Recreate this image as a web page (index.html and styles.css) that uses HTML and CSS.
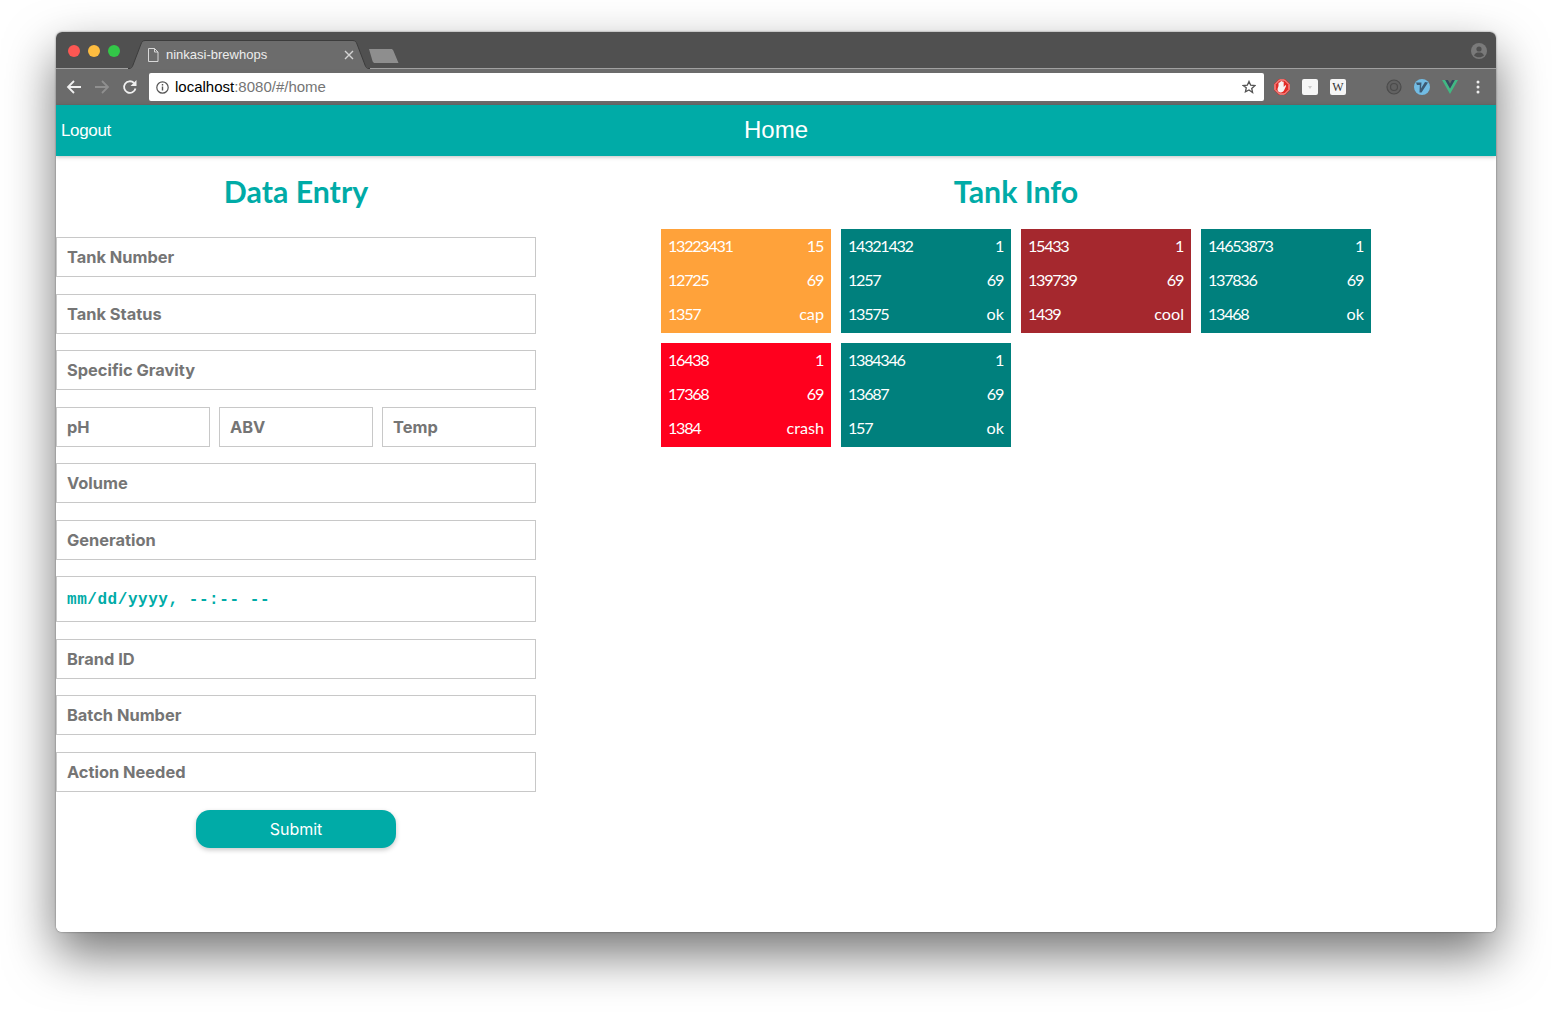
FILE: index.html
```html
<!DOCTYPE html>
<html lang="en">
<head>
<meta charset="utf-8">
<title>ninkasi-brewhops</title>
<link rel="stylesheet" href="styles.css">
</head>
<body>
<div class="window">
  <div class="tabstrip">
    <div class="lights"><span class="light red"></span><span class="light yellow"></span><span class="light green"></span></div>
    <div class="tab">
      <svg class="tab-shape" width="244" height="29" viewBox="0 0 244 29"><path d="M0 29l2-1c1-.5 2-1 3-3L13 4c.6-2 2-3.500 4-3.500h208c2 0 3.400 1.500 4 3.500l8 21c1 2 2 2.500 3 3l2 1z" fill="#6c6c6c"/><path d="M0 28.500h1c2 0 3.200-1 4-3.500L13 4c.6-2 2-3.500 4-3.500h208c2 0 3.400 1.500 4 3.500l8 21c.8 2.500 2 3.500 4 3.500h1" fill="none" stroke="#3c3c3c"/></svg>
      <svg class="tab-file" width="12" height="14" viewBox="0 0 12 14"><path d="M1.500.5h6l3.500 3.500v9.500h-9.500zM7.500.5v3.500h3.500" fill="none" stroke="#d8d8d8"/></svg>
      <span class="tab-title">ninkasi-brewhops</span>
      <svg class="tab-close" width="10" height="10" viewBox="0 0 10 10"><path d="M1 1l8 8M9 1l-8 8" stroke="#d4d4d4" stroke-width="1.400"/></svg>
    </div>
    <svg class="newtab" width="34" height="16" viewBox="0 0 34 16"><path d="M1 1h22c1 0 2 .5 2.500 2l5 12H7c-1 0-2-.5-2.500-2z" fill="#8e8e8e"/></svg>
    <svg class="profile" width="16" height="16" viewBox="0 0 16 16"><circle cx="8" cy="8" r="8" fill="#7a7a7a"/><circle cx="8" cy="6" r="2.600" fill="#505050"/><path d="M3 12.500c1-2.500 3-3 5-3s4 .5 5 3c-1.300 1.200-3 1.800-5 1.800s-3.700-.6-5-1.800z" fill="#505050"/></svg>
  </div>
  <div class="toolbar">
    <svg class="nav" width="16" height="16" viewBox="0 0 16 16"><path d="M15 8H2M8 2L2 8l6 6" fill="none" stroke="#f0f0f0" stroke-width="1.800"/></svg>
    <svg class="nav" width="16" height="16" viewBox="0 0 16 16"><path d="M1 8h13M8 2l6 6-6 6" fill="none" stroke="#8f8f8f" stroke-width="1.800"/></svg>
    <svg class="nav" width="16" height="16" viewBox="0 0 16 16"><path d="M13.500 9.500A5.800 5.800 0 1 1 12 4" fill="none" stroke="#f0f0f0" stroke-width="1.800"/><path d="M14.500 1v6h-6z" fill="#f0f0f0"/></svg>
    <div class="omnibox">
      <svg class="info" width="13" height="13" viewBox="0 0 13 13"><circle cx="6.500" cy="6.500" r="5.700" fill="none" stroke="#555" stroke-width="1.200"/><path d="M6.500 5.500v4M6.500 3v1.500" stroke="#555" stroke-width="1.400"/></svg>
      <span class="url"><span class="host">localhost</span>:8080/#/home</span>
      <svg class="star" width="14" height="14" viewBox="0 0 24 24"><path d="M12 2.500l2.900 6.400 7 .8-5.200 4.700 1.400 6.900L12 17l-6.100 3.300 1.400-6.900L2.100 9.700l7-.8z" fill="none" stroke="#555" stroke-width="2.300"/></svg>
    </div>
    <div class="extensions">
      <svg width="16" height="16" viewBox="0 0 16 16"><path d="M5 0h6l5 5v6l-5 5H5l-5-5V5z" fill="#e22b27"/><path d="M5.500 1h5L15 5.500v5L10.500 15h-5L1 10.500v-5z" fill="none" stroke="#f3b5b3"/><path d="M4.500 7V4c0-.8 1-.8 1.200 0V3c0-.8 1.200-.8 1.300 0v-.5c0-.8 1.300-.8 1.400 0V3c0-.8 1.300-.8 1.300 0v5l1.300-1.500c.6-.6 1.400 0 1 .7l-1.800 3.800c-.6 1.500-1.800 2.500-3.500 2.500-2 0-3.200-1.500-3.200-3.500z" fill="#f6f0f0"/></svg>
      <span class="ext-blank"><i></i></span>
      <span class="ext-wiki">W</span>
      <svg class="ext-gap" width="16" height="16" viewBox="0 0 16 16"><circle cx="8" cy="8" r="7" fill="#616161" stroke="#4b4b4b" stroke-width="1.200"/><circle cx="8" cy="8" r="3.500" fill="none" stroke="#4b4b4b" stroke-width="1.200"/></svg>
      <svg width="16" height="16" viewBox="0 0 16 16"><circle cx="8" cy="8" r="8" fill="#72bce4"/><path d="M2 3.500h5.500L7 9.500 11 3l3 .5L7.500 13.500H5.500L5.800 6H3z" fill="#3d5a73"/></svg>
      <svg width="16" height="14" viewBox="0 0 16 14"><path d="M0 0h3.200L8 8.500 12.800 0H16L8 14z" fill="#41b883"/><path d="M3.200 0h2.700L8 3.800 10.100 0h2.700L8 8.500z" fill="#35495e"/></svg>
      <svg width="16" height="16" viewBox="0 0 16 16"><circle cx="8" cy="3" r="1.500" fill="#eee"/><circle cx="8" cy="8" r="1.500" fill="#eee"/><circle cx="8" cy="13" r="1.500" fill="#eee"/></svg>
    </div>
  </div>
  <header class="app-header">
    <a class="logout">Logout</a>
    <h1 class="page-title">Home</h1>
  </header>
  <main class="content">
    <section class="entry">
      <h2 class="section-title">Data Entry</h2>
      <form class="form">
        <input class="field" placeholder="Tank Number">
        <input class="field" placeholder="Tank Status">
        <input class="field" placeholder="Specific Gravity">
        <div class="triple">
          <input class="field" placeholder="pH">
          <input class="field" placeholder="ABV">
          <input class="field" placeholder="Temp">
        </div>
        <input class="field" placeholder="Volume">
        <input class="field" placeholder="Generation">
        <input class="field date" placeholder="mm/dd/yyyy, --:-- --">
        <input class="field" placeholder="Brand ID">
        <input class="field" placeholder="Batch Number">
        <input class="field" placeholder="Action Needed">
        <button class="submit" type="button">Submit</button>
      </form>
    </section>
    <section class="tanks">
      <h2 class="section-title">Tank Info</h2>
      <div class="tiles">
        <div class="tile orange"><span class="num">13223431</span><span class="num">15</span><span class="num">12725</span><span class="num">69</span><span class="num">1357</span><span>cap</span></div>
        <div class="tile teal"><span class="num">14321432</span><span class="num">1</span><span class="num">1257</span><span class="num">69</span><span class="num">13575</span><span>ok</span></div>
        <div class="tile brown"><span class="num">15433</span><span class="num">1</span><span class="num">139739</span><span class="num">69</span><span class="num">1439</span><span>cool</span></div>
        <div class="tile teal"><span class="num">14653873</span><span class="num">1</span><span class="num">137836</span><span class="num">69</span><span class="num">13468</span><span>ok</span></div>
        <div class="tile red"><span class="num">16438</span><span class="num">1</span><span class="num">17368</span><span class="num">69</span><span class="num">1384</span><span>crash</span></div>
        <div class="tile teal"><span class="num">1384346</span><span class="num">1</span><span class="num">13687</span><span class="num">69</span><span class="num">157</span><span>ok</span></div>
      </div>
    </section>
  </main>
</div>
</body>
</html>
```
FILE: styles.css
```css
* { box-sizing: border-box; }
html, body { height: 100%; }
body {
  margin: 0;
  padding: 32px 56px 0;
  background: #fff;
  overflow: hidden;
  font-family: "Liberation Sans", Arial, sans-serif;
}
.window {
  width: 1440px;
  height: 900px;
  background: #fff;
  border-radius: 6px;
  overflow: hidden;
  display: flex;
  flex-direction: column;
}
body::before {
  content: "";
  position: absolute;
  left: 56px;
  top: 32px;
  width: 1440px;
  height: 900px;
  border-radius: 6px;
  box-shadow: 0 22px 50px rgba(0,0,0,.55), 0 0 2px rgba(0,0,0,.5);
  z-index: -1;
}
.tabstrip {
  height: 37px;
  flex: none;
  background: #505050;
  border-bottom: 1px solid #a0a0a0;
  display: flex;
  align-items: flex-start;
  position: relative;
}
.lights { display: flex; gap: 8px; padding: 13px 0 0 12px; width: 74px; flex: none; }
.light { width: 12px; height: 12px; border-radius: 50%; }
.red { background: #fc5753; }
.yellow { background: #fdbc40; }
.green { background: #33c748; }
.tab {
  position: relative;
  width: 240px;
  height: 36px;
  flex: none;
  display: flex;
  align-items: center;
  padding: 9px 16px 0 17px;
  color: #ececec;
}
.tab-shape { position: absolute; left: -2px; top: 8px; }
.tab-file, .tab-title, .tab-close { position: relative; }
.tab-file { margin-right: 7px; flex: none; }
.tab-title { font-size: 13px; flex: 1; font-family: "Liberation Sans", Arial, sans-serif; }
.tab-close { flex: none; }
.newtab { margin: 16px 0 0 -2px; flex: none; }
.profile { margin: 11px 9px 0 auto; flex: none; }
.toolbar {
  height: 36px;
  flex: none;
  background: #6b6b6b;
  display: flex;
  align-items: center;
  padding: 0 10px 0 10px;
}
.nav { margin-right: 12px; flex: none; }
.nav:nth-child(3) { margin-right: 11px; }
.omnibox {
  width: 1115px;
  height: 28px;
  background: #fff;
  border-radius: 2px;
  display: flex;
  align-items: center;
  padding: 0 8px 0 7px;
  flex: none;
}
.info { flex: none; margin-right: 6px; }
.url { font-size: 15px; color: #757575; flex: 1; padding-bottom: 2px; font-family: "Liberation Sans", Arial, sans-serif; }
.host { color: #000; }
.star { flex: none; }
.extensions { display: flex; align-items: center; gap: 12px; margin-left: 10px; flex: none; }
.ext-blank {
  width: 16px; height: 16px; background: #f7f7f7; border-radius: 2px;
  display: flex; justify-content: center; padding-top: 7px;
}
.ext-blank i { width: 0; height: 0; border: 2.500px solid transparent; border-top: 3px solid #ccc; }
.ext-wiki {
  width: 16px; height: 16px; background: #f5f5f5; border-radius: 2px;
  font: 12px/16px "Liberation Serif", serif; text-align: center; color: #333;
}
.ext-gap { margin-left: 28px; }
.app-header {
  height: 51px;
  flex: none;
  background: #00aba7;
  color: #fff;
  display: flex;
  align-items: center;
  justify-content: center;
  position: relative;
  box-shadow: 0 1px 4px rgba(0,0,0,.25);
  z-index: 1;
}
.logout { position: absolute; left: 5px; top: 16px; font-size: 17px; letter-spacing: -.35px; }
.page-title { margin: 0 0 2px; font-size: 24px; font-weight: 400; }
.content { display: flex; flex: 1; }
.entry { width: 480px; flex: none; }
.tanks { flex: 1; }
.section-title {
  margin: 0;
  height: 81px;
  padding-top: 15px;
  font: 700 30.300px/40px Lato, sans-serif;
  color: #00aba7;
  text-align: center;
}
.form { display: flex; flex-direction: column; }
.field {
  display: block;
  width: 100%;
  height: 40px;
  margin-bottom: 16.500px;
  padding: 0 10px;
  border: 1px solid #c8c8c8;
  border-radius: 0;
  outline: none;
  background: #fff;
  font: 700 16.400px Inter, sans-serif;
  color: #757575;
}
.field::placeholder { color: #757575; opacity: 1; }
.triple { display: grid; grid-template-columns: repeat(3, 1fr); gap: 9px; }
.date { height: 46px; padding-top: 2px; font: 700 16px "Liberation Mono", monospace; letter-spacing: .55px; }
.date::placeholder { color: #00aba7; }
.submit {
  align-self: center;
  width: 200px;
  height: 38px;
  margin-top: 1.500px;
  border: 0;
  border-radius: 14px;
  background: #00aba7;
  color: #fff;
  font: 400 16px Inter, sans-serif;
  box-shadow: 0 2px 5px rgba(0,0,0,.22);
}
.tiles { width: 720px; margin: -13px auto 0; display: flex; flex-wrap: wrap; }
.tile {
  width: 170px;
  height: 104px;
  margin: 5px;
  padding: 0 7px;
  display: grid;
  grid-template-columns: 1fr auto;
  grid-auto-rows: 34px;
  align-items: center;
  color: #fff;
  font: 400 16.200px/34px Lato, sans-serif;
}
.tile span:nth-child(even) { text-align: right; }
.num { letter-spacing: -1.300px; }
.tile .num:nth-child(even) { padding-right: 1px; }
.orange { background: #ffa23a; }
.teal { background: #00807d; }
.brown { background: #a5282e; }
.tile.red { background: #ff001e; }
```
